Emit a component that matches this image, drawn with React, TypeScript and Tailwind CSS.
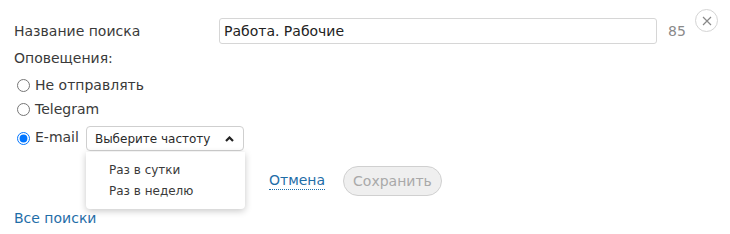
import React from 'react';

const App: React.FC = () => {
  return (
    <div
      className="relative w-[730px] h-[234px] bg-white px-[14px] pt-[18px] text-[14px] text-[#3a3a3a]"
      style={{ fontFamily: '"DejaVu Sans", Verdana, sans-serif' }}
    >
      {/* закрыть */}
      <button className="absolute top-[9px] right-[12px] w-[23px] h-[23px] rounded-full border border-[#d4d4d4] flex items-center justify-center">
        <svg width="10" height="10" viewBox="0 0 10 10" stroke="#888" strokeWidth="1.2" fill="none">
          <path d="M1 1L9 9M9 1L1 9" />
        </svg>
      </button>

      <div className="flex items-center h-[26px]">
        <span className="w-[205px]">Название поиска</span>
        <input
          className="w-[438px] h-[26px] border border-[#d6d6d6] rounded-[3px] px-[4px] outline-none text-[14px] text-[#222]"
          defaultValue="Работа. Рабочие"
        />
        <span className="ml-[11px] text-[#8a8a8a]">85</span>
      </div>

      <div className="mt-[4px] h-[20px] flex items-center">Оповещения:</div>

      <label className="mt-[5px] h-[24px] flex items-center">
        <input type="radio" name="notify" className="ml-[3px] w-[13px] h-[13px]" />
        <span className="ml-[5px]">Не отправлять</span>
      </label>
      <label className="h-[24px] flex items-center">
        <input type="radio" name="notify" className="ml-[3px] w-[13px] h-[13px]" />
        <span className="ml-[5px]">Telegram</span>
      </label>

      <div className="relative mt-[5px] h-[25px] flex items-center">
        <input type="radio" name="notify" defaultChecked className="ml-[3px] w-[13px] h-[13px]" />
        <span className="ml-[5px] -mt-[2px]">E-mail</span>
        <div className="ml-[7px] w-[158px] h-[25px] border border-[#cfcfcf] rounded-[4px] flex items-center justify-between pl-[8px] pr-[9px] text-[12px] text-[#2a2a2a]">
          <span>Выберите частоту</span>
          <svg width="9" height="6" viewBox="0 0 9 6" fill="none" stroke="#222" strokeWidth="2.2">
            <path d="M1 5L4.5 1.5L8 5" />
          </svg>
        </div>
        <div className="absolute left-[72px] top-[26px] z-10 w-[159px] h-[57px] bg-white rounded-b-[4px] shadow-[0_2px_7px_rgba(0,0,0,0.22)] pl-[23px] pt-[7px] text-[12px] text-[#3a3a3a]">
          <div className="h-[21px] flex items-center">Раз в сутки</div>
          <div className="h-[21px] flex items-center">Раз в неделю</div>
        </div>
      </div>

      <div className="mt-[15px] h-[30px] flex items-center">
        <a className="ml-[255px] text-[#1f6ea8] border-b border-dotted border-[#1f6ea8] leading-[17px]">Отмена</a>
        <button className="ml-[18px] h-[30px] px-[9px] rounded-full border border-[#d0d0d0] bg-[#efefef] text-[#a9a9a9] text-[14px]">
          Сохранить
        </button>
      </div>

      <div className="mt-[12px] h-[20px] flex items-center">
        <a className="text-[#1f6ea8]">Все поиски</a>
      </div>
    </div>
  );
};

export default App;
